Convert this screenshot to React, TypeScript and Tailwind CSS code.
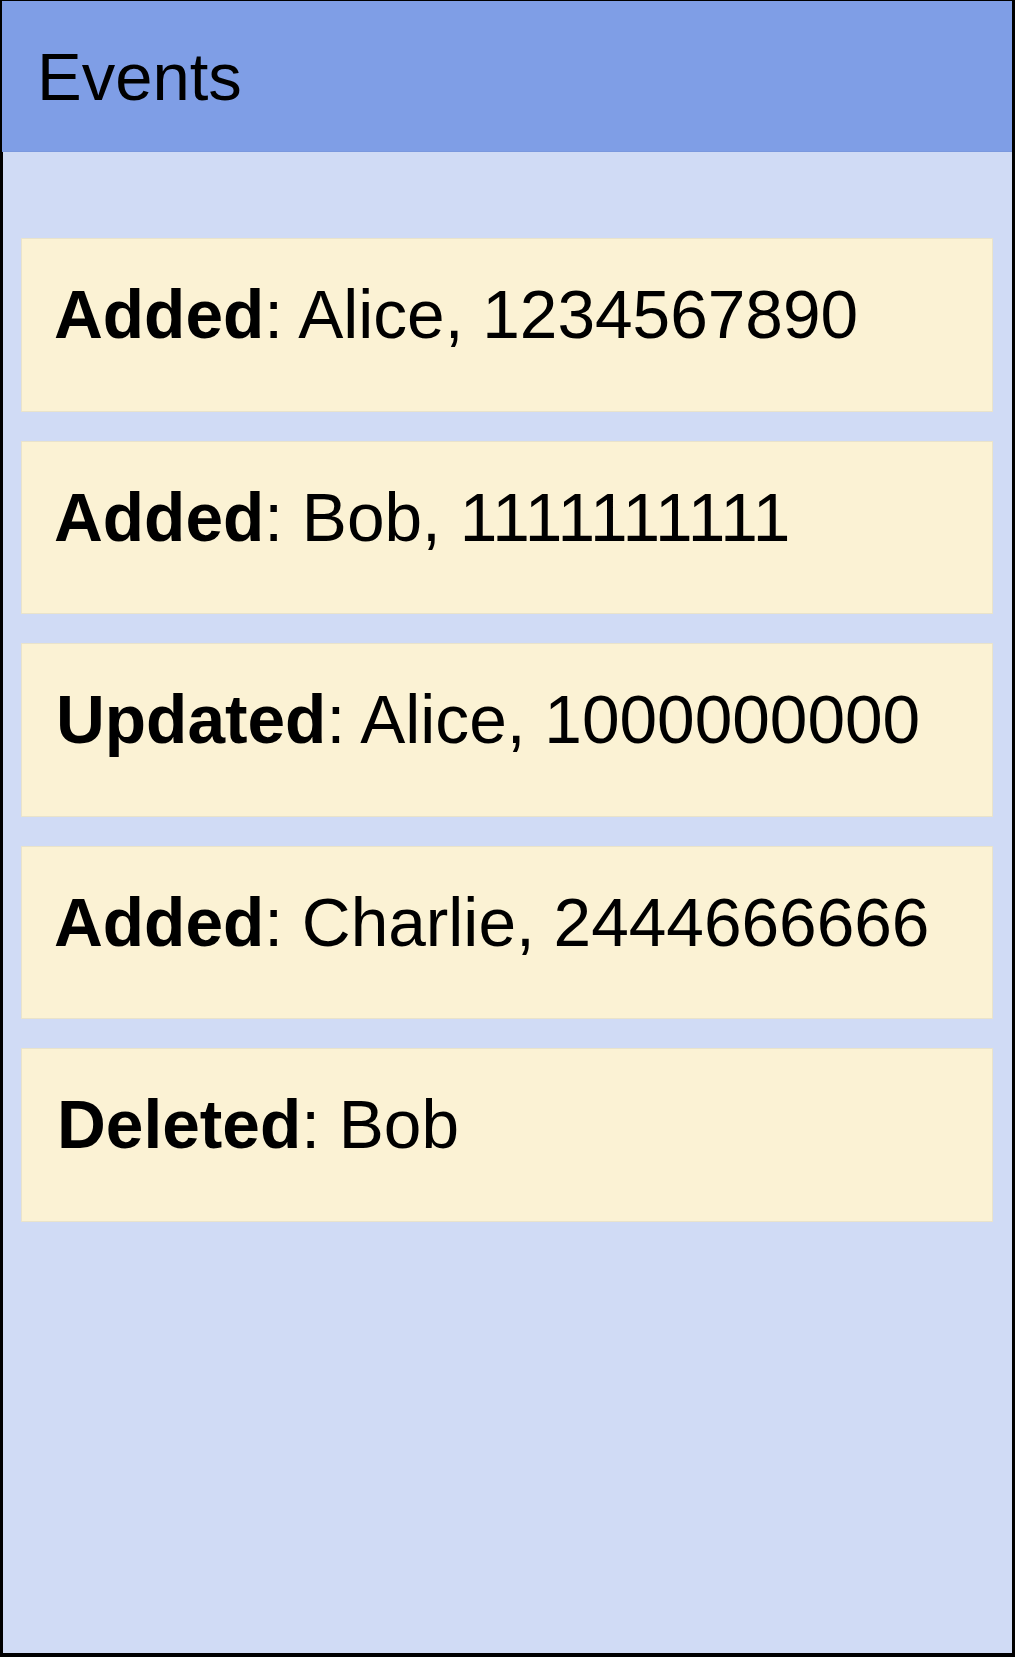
const events = [
  { kind: "Added", text: "Alice, 1234567890", pad: "pl-[32px]" },
  { kind: "Added", text: "Bob, 1111111111", pad: "pl-[32px]" },
  { kind: "Updated", text: "Alice, 1000000000", pad: "pl-[34px]" },
  { kind: "Added", text: "Charlie, 2444666666", pad: "pl-[32px]" },
  { kind: "Deleted", text: "Bob", pad: "pl-[35px]" },
];

export default function App() {
  return (
    <div
      className="w-[1015px] h-[1657px] flex flex-col border-black border-t-[1px] border-l-[2px] border-r-[3px] border-b-[4px] bg-[#d0dbf5] text-black"
      style={{ fontFamily: '"Liberation Sans", Arial, sans-serif' }}
    >
      <div className="h-[151px] flex items-center bg-[#7f9ee6] pl-[35px] border-b border-[#7a98de]">
        <span className="text-[67px] leading-[77px]">Events</span>
      </div>
      <div className="flex-1 flex flex-col gap-[29px] pt-[86px] pl-[18px] pr-[19px] border-l border-black">
        {events.map((e, i) => (
          <div
            key={i}
            className={`h-[173.5px] bg-[#fbf2d4] border border-[#e9e3cb] pt-[37px] ${e.pad}`}
          >
            <span className="text-[67.6px] leading-[77px]">
              <b className="font-bold">{e.kind}</b>: {e.text}
            </span>
          </div>
        ))}
      </div>
    </div>
  );
}
